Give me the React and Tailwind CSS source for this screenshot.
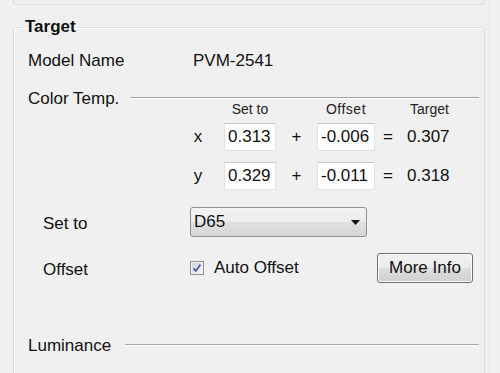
import React from "react";

const font = { fontFamily: '"Liberation Sans", Arial, sans-serif' };

const ValueBox = ({ value, width }) => (
  <div
    className={`${width} h-[28px] bg-white border border-[#e2e3ea] border-t-[#c5c7cf] flex items-center pl-[3px] text-[17px] text-[#111]`}
  >
    {value}
  </div>
);

const ChromaRow = ({ axis, setTo, offset, target, className }) => (
  <div className={`flex items-center h-[28px] text-[17px] text-[#111] ${className}`}>
    <div className="w-[158px]" />
    <div className="w-[24px] text-center">{axis}</div>
    <div className="w-[14px]" />
    <ValueBox value={setTo} width="w-[52px]" />
    <div className="w-[41px] text-center">+</div>
    <ValueBox value={offset} width="w-[58px]" />
    <div className="w-[26px] text-center">=</div>
    <div className="pl-[6px]">{target}</div>
  </div>
);

const SectionLine = ({ label, gap, className }) => (
  <div className={`flex items-center ${className}`}>
    <span className="text-[17px] leading-none text-[#111]">{label}</span>
    <div className={`flex-1 ${gap} h-[2px] border-t border-[#a5a5a5] border-b border-b-white`} />
  </div>
);

const AutoCheck = () => (
  <svg width="14" height="14" viewBox="0 0 14 14" className="shrink-0">
    <defs>
      <linearGradient id="cb" x1="0" y1="0" x2="1" y2="1">
        <stop offset="0" stopColor="#cfd3da" />
        <stop offset="1" stopColor="#f7f7f7" />
      </linearGradient>
    </defs>
    <rect x="0.5" y="0.5" width="13" height="13" fill="#f4f4f4" stroke="#8e8f8f" />
    <rect x="2" y="2" width="10" height="10" fill="url(#cb)" />
    <path d="M3.5 7.2 L5.8 10 L10.4 3.6" fill="none" stroke="#4e64a6" strokeWidth="1.8" />
  </svg>
);

export default function App() {
  return (
    <div className="w-[500px] h-[373px] bg-[#f0f0f0] overflow-hidden flex" style={font}>
      <div className="w-[489px] shrink-0">
        <div className="ml-[13px] w-[472px] h-[5px] border-x border-b border-[#d5dfe5] rounded-b-[3px]" />

        <fieldset className="mt-[12px] ml-[13px] w-[472px] h-[420px] border border-[#d5dfe5] rounded-[3px] shadow-[inset_1px_1px_0_#fff]">
          <legend className="ml-[8px] px-[3px] text-[17px] leading-[20px] font-bold text-[#111]">
            Target
          </legend>

          <div className="pt-[9px] pl-[14px] pr-[5px] flex flex-col">
            <div className="flex items-center h-[30px] text-[17px] text-[#111]">
              <div className="w-[165px]">Model Name</div>
              <div>PVM-2541</div>
            </div>

            <SectionLine label="Color Temp." gap="ml-[11px]" className="mt-[14px] h-[16px]" />

            <div className="-mt-[4px] flex items-center h-[14px] text-[14px] leading-[14px] text-[#222]">
              <div className="w-[196px]" />
              <div className="w-[52px] text-center">Set to</div>
              <div className="w-[41px]" />
              <div className="w-[58px] text-center tracking-[0.5px]">Offset</div>
              <div className="w-[26px]" />
              <div className="pl-[9px]">Target</div>
            </div>

            <ChromaRow axis="x" setTo="0.313" offset="-0.006" target="0.307" className="mt-[7px]" />
            <ChromaRow axis="y" setTo="0.329" offset="-0.011" target="0.318" className="mt-[11px]" />

            <div className="mt-[17px] flex items-center h-[30px] text-[17px] text-[#111]">
              <div className="w-[162px] pl-[15px] pt-[4px]">Set to</div>
              <div className="w-[177px] h-[30px] rounded-[3px] border border-[#8e8f8f] bg-[linear-gradient(#f3f3f3_0%,#ececec_48%,#dfdfdf_52%,#d6d6d6_100%)] flex items-center pl-[3px] pr-[6px]">
                <span className="flex-1">D65</span>
                <svg width="9" height="5" viewBox="0 0 9 5">
                  <path d="M0 0 H9 L4.5 5 Z" fill="#111" />
                </svg>
              </div>
            </div>

            <div className="mt-[16px] flex items-center h-[30px] text-[17px] text-[#111]">
              <div className="w-[162px] pl-[15px] pt-[3px]">Offset</div>
              <div className="flex items-center w-[187px]">
                <AutoCheck />
                <span className="ml-[10px]">Auto Offset</span>
              </div>
              <button className="w-[96px] h-[30px] rounded-[3px] border border-[#707070] bg-[linear-gradient(#f2f2f2_0%,#ebebeb_48%,#dddddd_52%,#cfcfcf_100%)] shadow-[inset_0_0_0_1px_#fcfcfc] text-[17px] text-[#111]">
                More Info
              </button>
            </div>

            <SectionLine label="Luminance" gap="ml-[14px]" className="mt-[52px] h-[20px]" />
          </div>
        </fieldset>
      </div>
      <div className="flex-1 border-l border-[#dde5ea]" />
    </div>
  );
}
